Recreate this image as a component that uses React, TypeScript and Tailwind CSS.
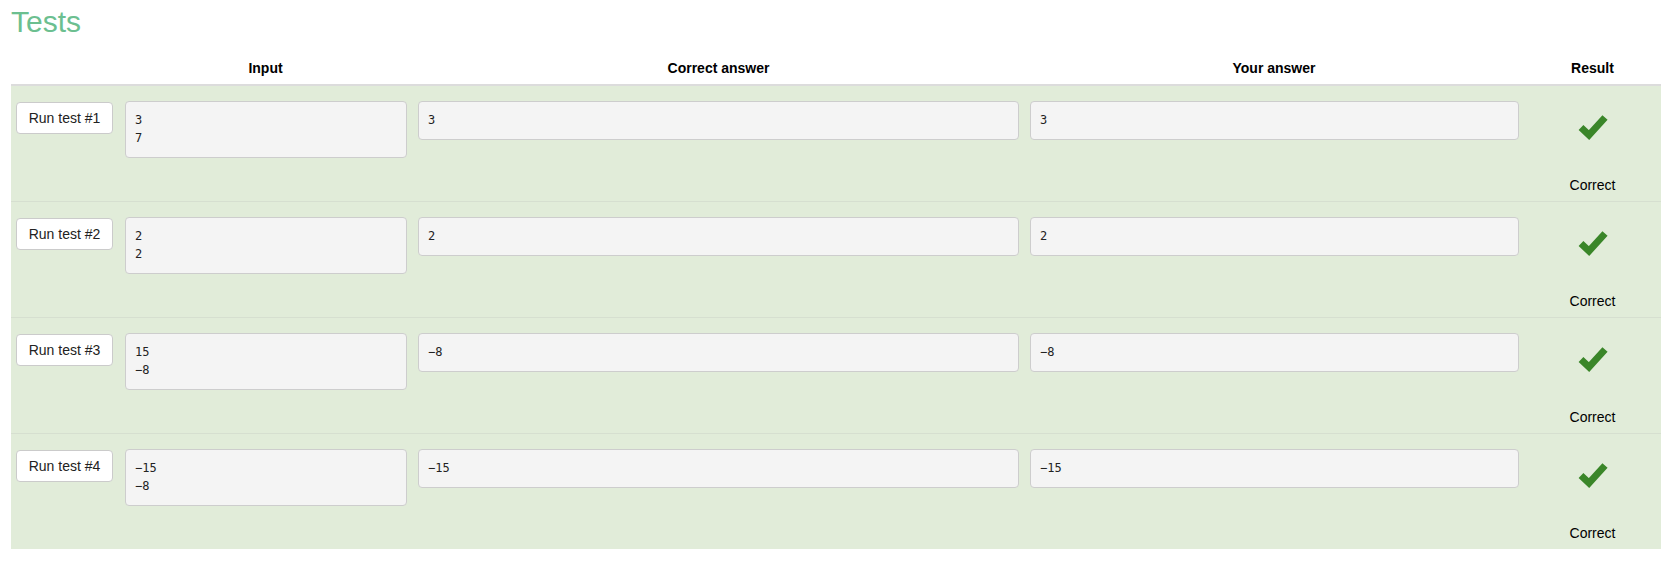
const tests = [
  { id: 1, input: ["3", "7"], expected: "3", actual: "3" },
  { id: 2, input: ["2", "2"], expected: "2", actual: "2" },
  { id: 3, input: ["15", "−8"], expected: "−8", actual: "−8" },
  { id: 4, input: ["−15", "−8"], expected: "−15", actual: "−15" },
];

const cols = "grid grid-cols-[107px_295px_611px_500px_137px]";

function Check() {
  return (
    <svg width="30" height="27" viewBox="0 0 30 27" className="text-[#3a8629]">
      <path d="M3 14.5 L11 22 L27 4.5" fill="none" stroke="currentColor" strokeWidth="7" strokeLinejoin="miter" />
    </svg>
  );
}

function Box({ lines, className }: { lines: string[]; className: string }) {
  return (
    <div
      className={`${className} border border-[#cdcdcd] rounded-[4px] bg-[#f4f4f4] pl-[9px] pt-[9px] pb-[10px] text-[12px] leading-[18px] text-[#222] font-['DejaVu_Sans_Mono',monospace]`}
    >
      {lines.map((l, i) => (
        <div key={i}>{l}</div>
      ))}
    </div>
  );
}

export default function App() {
  return (
    <div className="bg-white min-h-[568px] px-[11px] font-['Liberation_Sans',Arial,sans-serif] text-[14px] text-[#222]">
      <h1 className="pt-[7px] text-[30px] leading-[30px] text-[#6cbf90]">Tests</h1>

      <div className={`${cols} mt-[15px] h-[34px] border-b-2 border-[#dcdcdc] font-bold text-black`}>
        <div />
        <div className="text-center leading-[32px]">Input</div>
        <div className="text-center leading-[32px]">Correct answer</div>
        <div className="text-center leading-[32px]">Your answer</div>
        <div className="text-center leading-[32px]">Result</div>
      </div>

      {tests.map((t, i) => (
        <div
          key={t.id}
          className={`${cols} h-[115px] bg-[#e1ecd9] ${i > 0 ? "border-t border-[#d6dfd0] h-[116px]" : ""}`}
        >
          <div className="pl-[5px] pt-[16px]">
            <button className="w-[97px] h-[32px] bg-white border border-[#cbcbcb] rounded-[4px] text-[14px] text-[#222]">
              Run test #{t.id}
            </button>
          </div>
          <div className="pl-[7px] pt-[15px]">
            <Box lines={t.input} className="w-[282px] h-[57px]" />
          </div>
          <div className="pl-[5px] pt-[15px]">
            <Box lines={[t.expected]} className="w-[601px] h-[39px]" />
          </div>
          <div className="pl-[6px] pt-[15px]">
            <Box lines={[t.actual]} className="w-[489px] h-[39px]" />
          </div>
          <div className="flex flex-col items-center pt-[27px]">
            <Check />
            <div className="mt-[35px] leading-[20px] text-black">Correct</div>
          </div>
        </div>
      ))}
    </div>
  );
}
